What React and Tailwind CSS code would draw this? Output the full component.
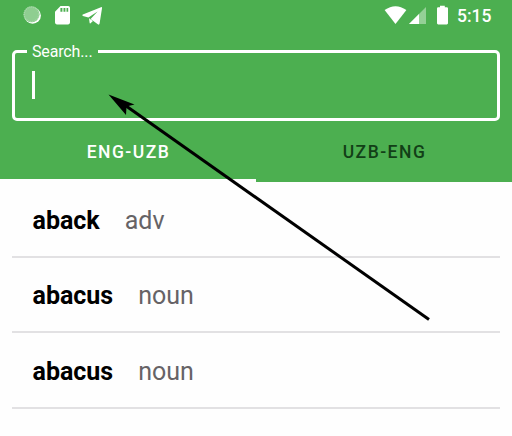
const words = [
  { word: "aback", kind: "adv" },
  { word: "abacus", kind: "noun" },
  { word: "abacus", kind: "noun" },
];

function StatusBar() {
  return (
    <div className="flex h-[34px] items-start justify-between pt-[5px] pr-[20px] pl-[23px]">
      <div className="flex">
        <svg width="19" height="20" viewBox="0 0 19 20">
          <circle cx="9.6" cy="10.5" r="8.3" fill="#fff" />
          <circle cx="8.5" cy="9.3" r="8" fill="#8fce91" />
          <circle cx="8.5" cy="9.3" r="7.3" fill="none" stroke="#a9d9aa" strokeWidth="1.4" strokeDasharray="1 1" />
        </svg>
        <svg className="ml-[13px]" width="15" height="20" viewBox="0 0 15 20">
          <path fillRule="evenodd" fill="#fff" d="M5.5 1H13.2Q15 1 15 2.8V17.6Q15 19.4 13.2 19.4H1.8Q0 19.4 0 17.6V6.7ZM5.4 3V6.8H7.4V3ZM8.5 3V6.8H10.4V3ZM11.5 3V6.8H13.2V3Z" />
        </svg>
        <svg className="ml-[12px]" width="22" height="21" viewBox="0 0 22 21">
          <path fill="#fff" d="M.8 9.6L19 2.2Q20.3 1.8 20 3.3L17.6 18.5Q17.2 20.3 15.8 19.3L8.6 14.1L15.6 6.6L6.4 12.4L.9 10.9Q-.1 10.3 .8 9.6Z" />
          <path fill="#fff" d="M7 13.3L8.4 14.3L11 16.1L8.5 18.3Q7.7 18.9 7.6 17.7Z" />
        </svg>
      </div>
      <div className="flex">
        <svg width="23" height="20" viewBox="0 0 23 20">
          <path fill="#fff" d="M.6 5Q11.5-2.6 22.4 5L11.5 19Z" />
        </svg>
        <svg className="ml-[1px]" width="18" height="20" viewBox="0 0 18 20">
          <path fill="#94d096" d="M18 2V19H1Z" />
          <path fill="#fff" d="M11 9V19H1Z" />
        </svg>
        <svg className="ml-[10px]" width="12" height="20" viewBox="0 0 12 20">
          <path fill="#fff" d="M4 .7H8.8V2.3H10.8Q12 2.3 12 3.5V18.3Q12 19.4 10.8 19.4H2.2Q1 19.4 1 18.3V3.5Q1 2.3 2.2 2.3H4Z" />
        </svg>
        <span className="ml-[9px] w-[35px] text-[17.5px] leading-[23px] font-medium whitespace-nowrap">5:15</span>
      </div>
    </div>
  );
}

export default function App() {
  return (
    <div className="relative h-[436px] w-[512px] overflow-hidden bg-[#fefefe] font-[Roboto,sans-serif]">
      <header className="flex h-[181.5px] flex-col bg-[#4caf50] text-white">
        <StatusBar />
        <fieldset className="mx-[12px] h-[87px] shrink-0 rounded-[5px] border-[3px] border-white pl-[12px]">
          <legend className="w-[71px] pl-[5px] text-[16px] leading-[35px] tracking-[-0.15px] whitespace-nowrap">Search...</legend>
          <div className="mt-[2px] ml-[5px] h-[28px] w-[2.5px] bg-white" />
        </fieldset>
        <nav className="grid flex-1 grid-cols-2 pt-[11px] text-center text-[17.5px] leading-[40px] font-medium tracking-[1.5px]">
          <div className="flex flex-col justify-between pl-[1px]">
            <span>ENG-UZB</span>
            <span className="-ml-[1px] h-[2.5px] bg-[#fefefe]" />
          </div>
          <div className="pl-[1px] text-[#123f17]">UZB-ENG</div>
        </nav>
      </header>
      <main className="mx-[12px] pt-[0.5px]">
        {words.map((entry, index) => (
          <div key={index} className="flex h-[75.5px] items-center gap-[25px] border-b-2 border-[#e2e1e3] pt-[4px] pl-[20.5px] text-[25px] leading-[30px]">
            <strong className="font-bold text-black">{entry.word}</strong>
            <span className="text-[#666366]">{entry.kind}</span>
          </div>
        ))}
      </main>
      <svg className="absolute inset-0" width="512" height="436" viewBox="0 0 512 436">
        <path d="M124 104.5L429 319.5" stroke="#000" strokeWidth="3" />
        <path d="M108.5 94.5L134.5 104.5L126.5 106.5L126 115Z" fill="#000" />
      </svg>
    </div>
  );
}
